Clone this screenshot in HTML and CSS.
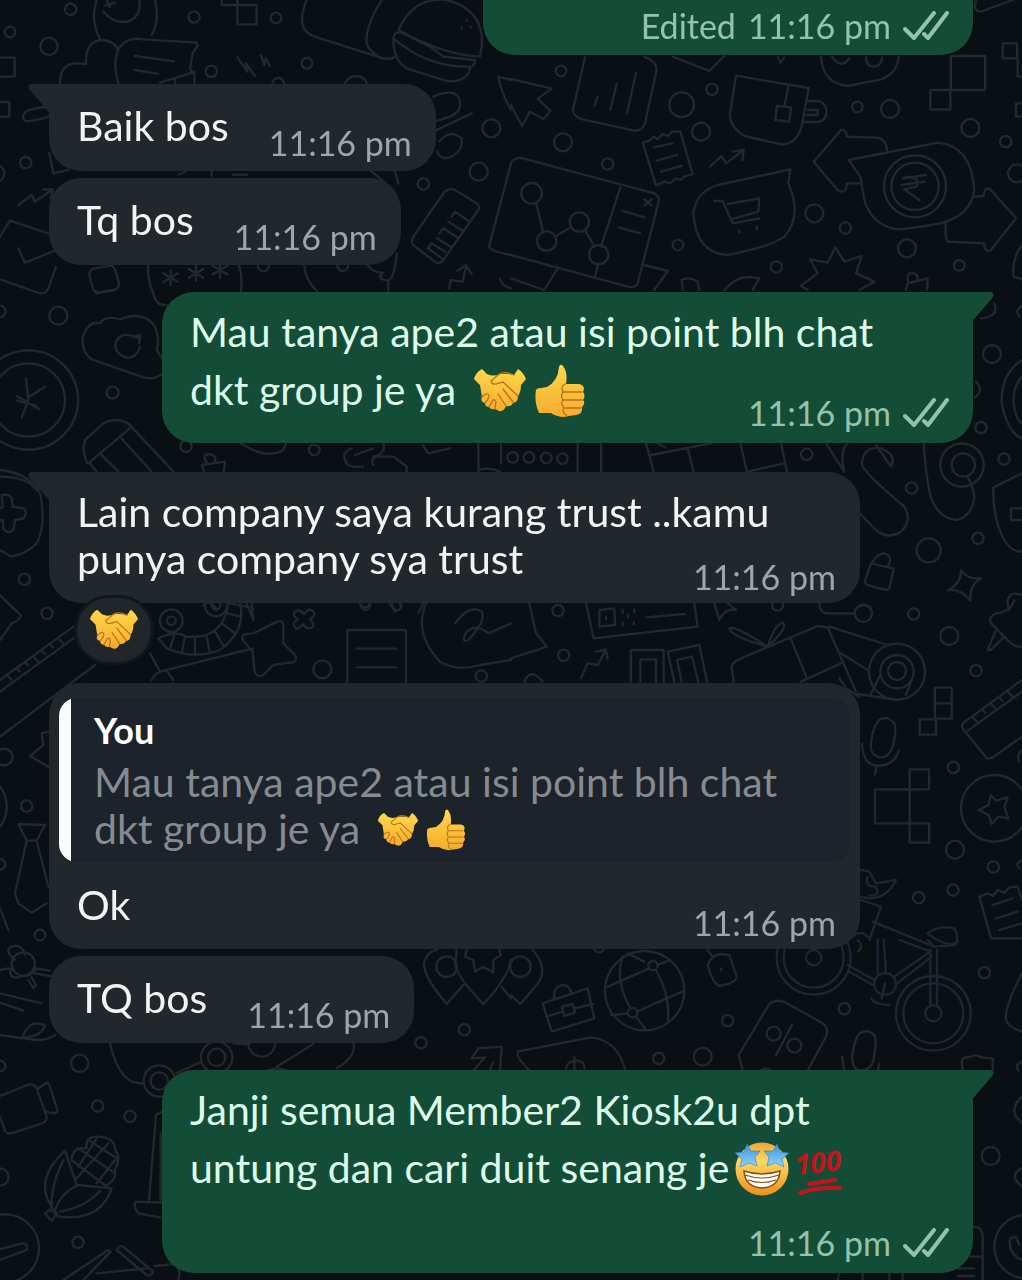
FILE: index.html
```html
<!DOCTYPE html>
<html lang="ms">
<head>
  <meta charset="UTF-8">
  <meta name="viewport" content="width=device-width, initial-scale=1.0">
  <title>Chat</title>
  <link rel="stylesheet" href="styles.css">
</head>
<body>

  <!-- Shared icons -->
  <svg class="sprite" aria-hidden="true">
    <defs>
      <linearGradient id="skin" x1="0" y1="0" x2="0" y2="1">
        <stop offset="0" stop-color="#ffd84a"/>
        <stop offset="1" stop-color="#f5ab2c"/>
      </linearGradient>
      <linearGradient id="face" x1="0" y1="0" x2="0" y2="1">
        <stop offset="0" stop-color="#f0a431"/>
        <stop offset=".35" stop-color="#fbd865"/>
        <stop offset=".7" stop-color="#f5b03a"/>
        <stop offset="1" stop-color="#ee8f1c"/>
      </linearGradient>
      <linearGradient id="star" x1="0" y1="0" x2="0" y2="1">
        <stop offset="0" stop-color="#3c94dc"/>
        <stop offset="1" stop-color="#8ed3fb"/>
      </linearGradient>
    </defs>
    <symbol id="handshake" viewBox="0 0 54 54">
      <path fill="url(#skin)" d="M9 5 L14 10 Q20 13 27 10 Q34 9 41 11 L45 5 Q50 8 53 15 L48 21 Q48 28 45 32 Q45 38 40 39 Q38 43 33 42 Q31 48 26 47 L22 45 Q18 46 16 43 Q12 43 12 39 Q7 38 9 33 L7 21 L1 15 Q3 8 9 5 Z"/>
      <path class="crease" d="M41 11 Q31 6 25 11 L18 17 Q19 22 26 19 L30 18 L45 32 M30 25 L40 38 M25 30 L33 42 M9 33 Q12 29 15 30 Q18 32 12 39 M16 43 L20 36 Q22 35 23 38 L22 45"/>
    </symbol>
    <symbol id="thumb" viewBox="0 0 54 54">
      <path fill="url(#skin)" d="M3 26 Q4 24 8 24 L14 23 Q25 17 26 3 Q27 -1 30 2 Q35 9 33 20 L46 20 Q51 21 51 25 L50 28 Q53 31 50 36 Q53 39 49 43 Q50 50 43 51 L30 53 Q22 52 18 49 L6 49 Q1 38 3 26 Z"/>
      <path class="crease" d="M32 20 Q27 23 30 28 Q27 32 30 36 Q27 40 31 44 Q28 48 34 52 M30 28 L49 28 M30 36 L49 36 M31 44 L48 44"/>
    </symbol>
    <symbol id="starstruck" viewBox="0 0 54 54">
      <circle cx="27" cy="27" r="26.5" fill="url(#face)"/>
      <path fill="#fff" stroke="#8d4a12" stroke-width="1.5" d="M9 29 Q27 35 45 29 Q44 45 27 46 Q10 45 9 29 Z"/>
      <path fill="none" stroke="#8d4a12" stroke-width="1.2" d="M10 33 Q27 39 44 33 M13 38 Q27 43 41 38"/>
      <path id="eye" fill="url(#star)" stroke="#2d7dbd" stroke-width=".6" d="M12 2 L16 9 L25 9 L20 15 L22 24 L14 21 L5 25 L7 17 L0 11 L9 10 Z"/>
      <use href="#eye" transform="matrix(-1 0 0 1 54 0)"/>
    </symbol>
    <symbol id="ticks" viewBox="0 0 46 30">
      <path fill="none" stroke="currentColor" stroke-width="4" stroke-linecap="round" stroke-linejoin="round" d="M2 18 L11 27 L31 2 M21 23 L25 27 L44 2"/>
    </symbol>
    <symbol id="tail" viewBox="0 0 22 30">
      <path fill="currentColor" d="M0 0 H19 Q23 1 21 5 L3 26 Q0 28 0 30 Z"/>
    </symbol>
  </svg>

  <!-- Wallpaper -->
  <svg class="wallpaper" viewBox="0 0 3066 3840" preserveAspectRatio="xMidYMin slice" aria-hidden="true">
    <g>
      <circle cx="212" cy="28" r="17"/><circle cx="30" cy="96" r="16"/><circle cx="147" cy="139" r="26"/>
      <circle cx="582" cy="51" r="17"/><circle cx="828" cy="54" r="16"/><circle cx="634" cy="214" r="17"/>
      <circle cx="921" cy="190" r="16"/><circle cx="77" cy="488" r="17"/><circle cx="1474" cy="385" r="27"/>
      <circle cx="1436" cy="515" r="27"/><circle cx="1270" cy="552" r="17"/><circle cx="790" cy="797" r="17"/>
      <circle cx="1028" cy="797" r="16"/><circle cx="-12" cy="520" r="25"/><circle cx="835" cy="252" r="18"/>
      <path d="M290 0 Q270 60 300 118 M465 0 Q480 60 455 105 M310 35 Q350 80 395 60 Q425 40 418 0 M320 0 l10 20 M345 8 l-28 8"/>
      <path d="M180 250 Q180 190 230 190 L258 192 Q255 120 310 120 Q345 125 355 150 M355 250 Q335 180 360 140 Q385 110 430 118 L590 128 L592 138 L578 160 L570 205 L578 218 L480 248 M405 168 L522 184 M402 210 L475 221 M525 235 v15 M583 215 v35"/>
      <path d="M665 0 V15 H712 V0 M712 15 H770 V73 H712 Z M0 173 H44 V230 H0 M0 306 H28 V350 H0"/>
      <path d="M712 172 L742 215 L738 190 L765 228 M782 165 L793 195 L797 175 L810 198"/>
      <path d="M920 0 Q895 60 915 90 Q925 105 960 115 L1150 175 Q1180 180 1190 165 M1145 0 Q1095 80 1100 130 Q1105 150 1130 165"/>
      <path d="M1195 90 Q1240 -10 1340 0 Q1455 30 1445 140 L1440 170 Q1330 165 1195 90 Z M1180 115 Q1185 90 1210 100 L1290 140 L1330 170 L1425 180 Q1425 205 1400 200 Q1280 200 1180 115 M1180 120 Q1180 180 1220 205 L1340 243 Q1400 250 1412 200 M1400 60 v3 M1385 83 v3 M1412 80 v3"/>
      <path d="M1035 250 Q1045 228 1070 228 Q1095 230 1100 250 M145 318 L85 330 Q62 345 72 360 Q80 370 145 350"/>
      <path d="M1300 290 Q1370 260 1380 305 Q1385 335 1350 350 L1305 365 M1310 390 L1415 340 M1318 425 Q1350 385 1385 415 Q1390 455 1350 472 Q1320 480 1312 455"/>
      <path d="M1495 230 L1533 240 M1495 230 Q1500 270 1533 330"/>
      <path d="M148 458 L160 520 L205 510 M55 615 L95 585 L105 605 L155 570 M130 568 L158 568 L152 595"/>
      <path d="M1110 510 L1180 570 M1185 515 L1195 550 M635 510 v18 M700 524 h40 M535 524 l20 -8"/>
      <path d="M0 710 L30 662 L160 705 M55 745 L75 788 L165 752 M0 838 L120 880 Q145 882 150 850 L168 800"/>
      <path d="M285 805 L335 797 Q345 800 357 850 Q357 865 345 868 L290 880 Q280 878 268 825 Q268 808 285 805 Z M445 790 Q440 840 465 895 M715 790 Q730 830 722 875 M912 790 Q915 840 950 872 M1100 790 Q1115 820 1150 818 Q1125 838 1165 842 V872 M1190 760 Q1185 830 1165 842"/>
      <path d="M512 810 v45 M490 820 l44 26 M534 820 l-44 26 M588 797 v45 M566 807 l44 26 M610 807 l-44 26 M660 790 v45 M638 797 l44 26 M682 797 l-44 26"/>
      <path d="M1330 580 Q1345 562 1365 570 L1430 610 Q1440 618 1435 630 L1330 780 Q1320 795 1305 785 L1245 740 Q1230 730 1240 710 Z M1283 745 L1295 730 L1335 755 M1310 715 L1355 742 M1318 700 L1330 685 L1370 712 M1345 665 L1385 690 M1355 650 L1365 635 L1405 662 M1285 745 L1325 775"/>
      <path d="M1348 865 L1352 840 L1388 845 L1398 800 M1372 812 L1398 796 L1415 822 M1500 835 Q1505 860 1533 865"/>
    </g>

    <g transform="translate(1533 0)">
      <circle cx="150" cy="213" r="16"/><circle cx="156" cy="427" r="27"/><circle cx="290" cy="492" r="17"/>
      <circle cx="512" cy="314" r="37"/><circle cx="603" cy="268" r="17"/><circle cx="570" cy="395" r="27"/>
      <circle cx="1039" cy="321" r="16"/><circle cx="1137" cy="327" r="27"/><circle cx="1378" cy="384" r="27"/>
      <circle cx="1484" cy="425" r="17"/><circle cx="910" cy="640" r="27"/><circle cx="1003" cy="684" r="17"/>
      <circle cx="1188" cy="745" r="27"/><circle cx="1345" cy="796" r="16"/><circle cx="501" cy="735" r="16"/>
      <circle cx="796" cy="801" r="17"/><circle cx="1518" cy="520" r="27"/>
      <path d="M0 237 L122 266 L80 296 L118 332 L98 358 L57 335 L33 378 L0 315"/>
      <path d="M222 172 L187 325 Q182 348 215 358 L370 392 Q395 393 402 370 L437 210 Q438 185 400 170 M260 290 L250 318 M317 252 L298 330 M375 218 L348 340 M485 170 L595 213 L640 168 M800 172 L808 188 L820 172"/>
      <path d="M930 170 Q935 250 1010 258 L1110 238 Q1160 220 1163 170 M963 170 Q990 210 1015 175 M1065 170 Q1065 200 1090 200 Q1115 195 1113 172"/>
      <path d="M1395 0 Q1385 35 1410 35 L1505 0 M1475 130 H1518 V175 H1475 Z M1320 168 H1422 V270 H1320 Z M1258 270 H1318 V328 H1258 Z M1533 310 H1515 V350 H1533 M1520 175 V230 H1533"/>
      <path d="M675 227 L893 264 L872 380 Q855 435 810 433 L700 408 Q655 380 657 340 Z M833 255 L820 318 M797 318 L840 322 L835 365 L793 360 Z M890 303 H925 Q945 310 947 335 Q945 365 920 366 H880 M890 330 H920 V345 H885"/>
      <path d="M395 428 L415 422 L430 410 L440 418 L455 402 L470 408 L485 394 L508 395 L545 522 L520 530 L510 540 L495 535 L475 550 L460 545 L435 556 Z M428 442 L485 430 M437 482 L500 464 M450 515 L512 498"/>
      <path d="M597 500 L632 468 L645 490 L698 450 M665 455 L698 450 L695 480"/>
      <path d="M0 490 Q10 470 35 475 L430 580 Q447 590 443 605 L380 850 Q372 865 350 860 L0 765 M-66 740 L0 490 M-66 740 Q-60 755 0 765 M328 563 L270 740 M262 790 L252 830 M335 633 L400 652 M325 683 L388 700 M400 598 l22 18 M422 598 l-22 18 M75 608 L97 697 M132 710 L182 680 M222 690 L250 740 M0 835 L100 870 L140 805 M400 795 L470 813 L430 870"/>
      <circle cx="62" cy="580" r="31"/><circle cx="107" cy="723" r="29"/><circle cx="205" cy="666" r="29"/><circle cx="263" cy="764" r="29"/>
      <path d="M838 508 L832 550 Q875 650 820 710 Q780 740 650 765 Q555 760 547 640 Q555 575 620 555 Z M610 603 H635 L665 670 L745 655 M650 612 L745 595 L742 635 L660 658 M685 690 v8 M737 680 v8"/>
      <path d="M1128 450 Q1125 415 1095 413 L1008 410 Q1005 388 990 390 L908 485 L980 570 Q1005 585 1008 550 L1045 550 M1013 480 L1280 428 Q1380 435 1390 570 Q1380 645 1290 670 Q1180 690 1150 687 Q1080 670 1060 600 L1048 530 Z M1390 590 L1418 588 Q1420 560 1437 567 L1515 655 L1440 750 Q1420 760 1420 730 L1310 725 Q1300 710 1305 668"/>
      <circle cx="1212" cy="559" r="93"/><circle cx="1212" cy="559" r="71"/>
      <path d="M1175 535 L1245 525 M1172 555 L1242 545 M1185 530 Q1235 535 1215 560 L1180 568 L1225 600"/>
      <path d="M870 857 L920 820 L897 778 L950 788 L973 742 L1000 785 L1052 768 L1035 820 L1090 845 L1045 870 M870 857 L890 870 M515 870 L512 840 Q535 828 560 845 L565 870 M640 870 Q680 820 745 835 L725 870 M1185 870 L1190 850 L1250 835 L1248 870 M1192 848 Q1185 815 1208 820 Q1225 825 1218 843 M1533 735 Q1500 780 1508 830 L1533 838"/>
    </g>

    <g transform="translate(0 870)">
      <circle cx="0" cy="64" r="17"/><circle cx="175" cy="77" r="27"/><circle cx="338" cy="308" r="18"/>
      <circle cx="558" cy="469" r="17"/><circle cx="943" cy="480" r="16"/><circle cx="73" cy="868" r="17"/>
      <circle cx="85" cy="330" r="149"/><circle cx="85" cy="330" r="110"/>
      <path d="M78 265 L85 330 L65 382 M85 322 L135 290 M50 318 L118 358 M50 332 L108 346"/>
      <path d="M300 100 Q315 75 360 88 Q430 60 465 110 Q480 150 470 180 L490 210 M488 250 Q465 270 430 262 L275 208 Q240 180 250 135 Q270 90 300 100 M420 170 Q410 205 380 203 Q340 190 348 155 Q365 120 415 145 M395 140 L420 135 L418 160 M458 0 Q465 50 500 45 M280 0 L295 8 L345 0"/>
      <path d="M262 520 Q240 470 260 445 L310 400 Q345 380 385 400 L520 545 M395 410 L360 440 L455 545 M265 520 L300 490 L360 440 M300 490 L355 545 M270 520 L290 545"/>
      <path d="M612 545 L605 525 L675 515 L672 545 M622 520 Q600 490 635 493 Q655 505 640 520 M722 460 Q800 510 850 480 L858 460 M1055 475 Q1025 485 1035 510 Q1040 535 1090 530 M1065 495 L1120 475 M1120 525 Q1110 505 1130 500 L1180 500 L1220 530 V545 M1150 460 Q1160 490 1120 500 M1268 465 L1285 490 L1350 475 M1435 460 V545 M1503 460 V520 M1435 540 Q1470 530 1500 545"/>
      <path d="M0 540 Q90 550 120 610 Q140 700 110 760 Q80 790 35 800 L0 780 M0 560 Q80 560 110 600 M5 615 Q30 610 35 625 L38 650 L70 655 Q85 665 70 685 L45 690 L40 720 Q20 735 10 715 L8 690 L0 690 M0 655 L8 650 L5 615 M0 915 L50 965"/>
      <path d="M610 945 Q630 925 650 960 M690 940 L760 955 M1080 945 Q1095 975 1112 945 M1170 940 L1185 965 M1270 940 L1255 970"/>
    </g>

    <g transform="translate(1533 870)">
      <circle cx="1443" cy="192" r="27"/><circle cx="1410" cy="413" r="17"/><circle cx="887" cy="493" r="17"/>
      <circle cx="1202" cy="594" r="17"/><circle cx="1479" cy="507" r="17"/><circle cx="1253" cy="781" r="36"/>
      <circle cx="1401" cy="745" r="17"/><circle cx="5" cy="502" r="16"/><circle cx="54" cy="502" r="16"/>
      <circle cx="106" cy="504" r="16"/><circle cx="154" cy="506" r="16"/>
      <path d="M1450 40 Q1465 80 1410 85 M1533 48 Q1510 60 1525 80 M1395 275 Q1420 300 1392 322 M1533 210 Q1470 250 1472 340 Q1490 430 1533 445 M1533 260 Q1505 290 1508 340 Q1515 390 1533 400"/>
      <path d="M200 460 V545 M270 460 V545 M405 460 L428 545 M420 495 L600 460 M530 475 L548 545 M688 460 L708 545 L820 520 M810 460 L828 545 M440 460 l22 12 M945 460 L1000 545 Q985 480 1010 460"/>
      <path d="M1145 520 Q1150 490 1110 475 Q1060 465 1052 520 Q1055 545 1180 650 Q1205 690 1170 725 Q1130 750 1095 720 L1048 672 M1095 465 L1140 530 L1145 505 M1238 460 Q1245 570 1262 630 Q1290 690 1340 690 Q1385 675 1390 620 Q1385 580 1368 560"/>
      <circle cx="1353" cy="525" r="65"/><circle cx="1357" cy="525" r="35"/>
      <path d="M1533 550 L1447 592 Q1445 690 1480 750 Q1500 785 1533 785 M1533 655 H1500 V690 H1533"/>
      <path d="M1080 820 L1145 835 Q1150 840 1145 850 L1135 895 Q1130 902 1118 898 L1070 885 Q1060 882 1063 870 Z M1085 815 Q1110 780 1130 795 Q1145 805 1130 830"/>
      <path d="M1350 842 Q1375 870 1410 865 Q1375 885 1378 932 Q1350 895 1312 900 Q1350 880 1350 842 Z M1035 955 Q1060 935 1080 955 M1495 960 Q1480 920 1510 910 L1533 915"/>
    </g>

    <g transform="translate(0 1800)">
      <circle cx="141" cy="40" r="17"/><circle cx="13" cy="471" r="25"/><circle cx="80" cy="618" r="17"/>
      <circle cx="0" cy="793" r="16"/><circle cx="120" cy="1005" r="16"/><circle cx="967" cy="208" r="27"/>
      <circle cx="1444" cy="228" r="17"/><circle cx="514" cy="62" r="34"/><circle cx="514" cy="62" r="13"/>
      <circle cx="648" cy="15" r="34"/><circle cx="648" cy="15" r="13"/><circle cx="-80" cy="620" r="100"/>
      <path d="M25 10 L62 45 Q62 60 35 70 L0 120 M0 240 L220 80 M0 275 L220 115 M20 225 l14 14 M50 205 l9 9 M75 187 l9 9 M100 170 l14 14 M125 152 l9 9 M150 133 l9 9 M175 115 l14 14 M0 410 L285 195"/>
      <path d="M475 115 Q530 90 560 110 Q670 120 685 10 M475 115 L500 145 Q580 180 660 150 Q740 90 720 10 M510 145 L525 98 M545 160 L555 110 M585 165 L585 117 M630 160 L620 110 M672 140 L645 95 M705 100 L665 70 M722 50 L682 40"/>
      <path d="M760 100 L825 68 Q850 55 850 80 L850 130 L885 165 Q895 190 865 188 L820 195 L790 225 Q765 235 763 205 L758 155 L728 120 Q720 100 760 100 Z M450 160 L480 215 L760 145 M455 240 Q470 210 500 212 L520 240 M740 10 L760 60 L755 10"/>
      <path d="M885 35 Q900 25 912 42 Q930 20 940 35 Q950 45 930 58 Q950 80 930 85 Q915 85 910 72 Q890 95 885 80 Q875 70 893 58 Q875 45 885 35 Z M1042 245 V90 H1218 V245 M1070 146 H1188 M1070 202 H1188 M1278 10 Q1240 100 1320 185 Q1370 215 1440 195 L1533 180 M1365 70 Q1410 10 1445 35 Q1460 60 1405 120 Q1380 130 1400 95 Q1430 70 1465 100 L1533 70 M1080 10 Q1095 35 1110 10 M1175 10 Q1180 35 1195 30 Q1210 20 1200 10"/>
      <path d="M145 395 L125 400 L130 435 L90 468 L145 500 M55 672 L135 675 L110 722 H80 Z M80 722 L45 880 L55 910 L95 938 L140 910 M110 722 L145 860 M0 925 L25 990"/>
    </g>

    <g transform="translate(1533 1800)">
      <circle cx="141" cy="32" r="17"/><circle cx="158" cy="166" r="17"/><circle cx="1208" cy="42" r="17"/>
      <circle cx="1315" cy="108" r="27"/><circle cx="1395" cy="212" r="17"/><circle cx="1057" cy="40" r="26"/>
      <circle cx="1327" cy="502" r="17"/><circle cx="1332" cy="749" r="27"/><circle cx="1447" cy="801" r="17"/>
      <circle cx="1326" cy="870" r="17"/><circle cx="1223" cy="893" r="17"/><circle cx="800" cy="15" r="17"/>
      <circle cx="1450" cy="625" r="100"/><circle cx="1158" cy="215" r="84"/><circle cx="1158" cy="215" r="50"/><circle cx="1158" cy="213" r="27"/>
      <path d="M55 10 L75 100 L108 140 L0 175 M225 10 L248 115 L560 80 L550 10 M265 30 L310 25 L312 75 L265 80 Z M285 50 v8 M335 30 v8 M350 45 v8 M370 28 v8 M335 68 v8 M368 65 v8 M405 52 L520 42 M210 235 L230 190 L260 195 L285 148 M255 155 L285 148 L290 178 M40 245 Q60 200 95 245"/>
      <path d="M360 245 V150 H458 V245 M388 245 V178 H435 V245 M490 245 L470 155 L565 135 L588 245 M512 245 L498 180 L543 170 L562 245"/>
      <path d="M610 10 L625 60 Q640 25 675 30 L650 10 M770 140 Q660 110 655 85 Q670 75 770 140 Q790 75 815 68 Q835 80 770 140 M668 245 L662 200 Q665 185 690 175 L920 78 L950 82 L1035 275 M840 118 L888 235 M870 245 L990 190 M955 80 L1130 135 M990 160 L1070 210 M1080 282 L1105 230 M1185 285 L1200 245 M1040 282 L1160 300 M985 235 L1005 265 L1045 290 M925 10 Q925 40 950 40 H1030"/>
      <path d="M1105 360 Q1130 345 1150 370 Q1158 390 1145 440 Q1130 480 1100 470 Q1075 460 1080 430 Q1085 380 1105 360 Z M1053 432 Q1055 495 1100 497 Q1150 498 1163 452 M1097 497 L1092 523"/>
      <path d="M1272 263 H1322 V356 H1272 Z M1272 310 H1322 M1226 358 H1275 V404 H1226 Z M1196 508 H1254 V568 H1196 Z M1092 568 H1196 V670 H1092 Z M1196 670 H1254 V728 H1196 Z M1196 568 V670"/>
      <path d="M1533 240 L1355 370 Q1350 380 1358 390 L1425 472 Q1432 478 1445 472 L1533 410 M1370 392 L1533 275 M1385 352 l14 14 M1415 330 l9 9 M1440 312 l14 14 M1465 293 l9 9 M1490 275 l14 14 M1533 450 Q1515 465 1525 485 M1533 780 Q1510 790 1525 805"/>
      <path d="M1440 585 L1455 602 L1490 592 L1480 622 L1492 655 L1462 650 L1442 672 L1433 645 L1403 630 L1432 615 Z M1510 0 Q1500 35 1455 40 Q1425 55 1445 75 L1480 110 Q1510 145 1533 140 M1455 90 L1430 150 L1440 150 L1480 110"/>
      <path d="M1405 890 L1430 880 L1445 888 L1460 870 L1480 878 L1495 862 L1520 860 L1533 900 M1405 890 L1440 1015 L1533 1015 M1445 915 L1505 895 M1455 955 L1520 935 M1465 990 L1533 970"/>
      <path class="cool" d="M1050 810 L1075 815 L1095 850 L1155 840 Q1120 910 1045 890 M1070 830 Q1060 860 1095 860 Q1110 890 1075 885 M1050 900 L1110 920 L1075 1020 M1085 965 L1270 1040 M1020 1015 Q1045 985 1070 1010 M1250 1000 Q1280 975 1330 985 Q1345 1010 1335 1030 Q1300 1040 1250 1000"/>
    </g>

    <g transform="translate(0 2820)">
      <circle cx="239" cy="370" r="26"/><circle cx="293" cy="498" r="17"/><circle cx="390" cy="529" r="17"/>
      <circle cx="234" cy="907" r="17"/><circle cx="0" cy="378" r="16"/><circle cx="0" cy="711" r="26"/>
      <circle cx="1263" cy="308" r="17"/><circle cx="1393" cy="269" r="17"/><circle cx="650" cy="352" r="47"/>
      <circle cx="650" cy="352" r="26"/><circle cx="478" cy="423" r="47"/><circle cx="478" cy="423" r="26"/>
      <circle cx="785" cy="310" r="40"/><circle cx="1340" cy="80" r="31"/><circle cx="70" cy="72" r="35"/><circle cx="15" cy="925" r="102"/>
      <path d="M45 60 Q10 30 35 20 Q65 10 75 45 M30 90 Q30 120 60 110 Q95 110 110 85 M100 85 L150 92 M105 100 L160 110 M85 120 L100 145 L108 135 L95 112 M0 90 Q30 82 40 90 M0 160 L125 190 M0 188 L70 212 M0 285 L110 300 Q150 300 165 285 M70 285 Q85 250 110 250 L135 255 Q125 290 70 292"/>
      <path d="M330 310 Q350 400 395 425 L432 432 M528 400 L605 365 M830 380 L940 312 M700 310 Q740 315 750 310 M1060 310 Q1070 350 1010 385 M800 392 Q830 380 860 392"/>
      <path d="M1340 192 Q1270 110 1272 70 Q1280 35 1310 30 M1340 192 L1390 135 M1450 192 Q1370 110 1365 70 L1370 30 M1450 192 Q1520 120 1533 60 M1400 30 L1395 50 L1420 60 L1425 95 L1450 80 L1480 98 L1480 60 L1503 45 L1498 30 M1505 140 L1533 175"/>
      <path d="M1415 355 L1435 325 L1505 320 L1500 392 M1418 355 L1455 352 L1420 392 M1470 390 L1480 365"/>
      <path d="M0 468 L90 432 Q105 435 110 445 L140 530 Q140 545 125 550 L35 580 Q20 582 15 572 L0 530 M115 445 L140 428 Q145 430 150 440 L172 510 Q172 520 160 520 L138 515"/>
      <path d="M155 800 Q100 720 195 632 L230 735 M155 815 Q150 740 190 660 M165 812 Q180 760 235 735 L335 745 Q300 850 165 828 Z M180 815 Q260 800 300 752 M135 820 L155 805 L172 820 L155 842 Z M215 655 Q220 620 260 625 Q255 590 290 590 Q345 590 345 630 Q365 650 345 690 Q350 720 320 735 M215 660 L320 740 M235 625 L345 700 M265 600 L350 655 M225 720 L325 610 M290 730 L345 660 M235 680 L290 595"/>
      <path d="M488 515 L468 525 L447 780 M482 580 V785 M485 788 L405 785 Q400 800 415 820 L480 832 M0 928 L65 910 Q85 910 80 930 L0 960 M190 1020 L310 940 Q325 925 332 935 L250 1020 M290 1000 L440 985 M350 930 Q360 910 375 925 L460 995 Q455 1010 440 1005 Z M465 978 L525 972 Q545 990 535 1020"/>
    </g>

    <g transform="translate(1533 2820)">
      <circle cx="28" cy="80" r="31"/><circle cx="650" cy="242" r="17"/><circle cx="443" cy="355" r="17"/>
      <circle cx="575" cy="350" r="27"/><circle cx="1000" cy="206" r="17"/><circle cx="1420" cy="98" r="17"/>
      <circle cx="1439" cy="648" r="27"/><circle cx="788" cy="281" r="21"/><circle cx="850" cy="317" r="21"/>
      <circle cx="401" cy="152" r="119"/><circle cx="426" cy="77" r="14"/><circle cx="365" cy="218" r="14"/><circle cx="1545" cy="920" r="95"/>
      <path d="M65 30 Q110 80 85 125 L28 192 L0 165 M95 190 L230 145 L250 235 L122 275 Z M105 230 L155 215 M190 205 L245 192 M152 200 L185 192 L192 218 L160 228 Z M130 175 Q125 140 155 135 Q175 135 182 160"/>
      <path d="M290 140 L415 85 M440 75 L475 60 M335 50 Q310 120 358 205 M375 230 Q390 250 405 270 M435 90 Q480 170 470 250 M380 215 Q430 190 515 155 M300 225 L350 220 M400 65 L350 40"/>
      <path d="M590 75 Q600 45 630 42 L655 45 L677 110 Q675 130 625 138 Q605 130 590 75 Z M630 85 v6 M590 30 L605 50 M250 30 Q265 45 278 30 M20 340 Q15 350 55 392 M20 335 L240 292 Q320 300 343 392 M165 385 Q170 360 200 362 Q220 365 220 385 M190 350 V392"/>
      <path d="M775 192 Q795 175 825 188 L935 250 Q955 265 945 290 L890 392 M775 192 L683 345 L695 392 M843 255 L795 345 M750 392 Q765 380 780 392"/>
      <path d="M1045 280 Q1070 265 1090 285 Q1100 300 1085 370 Q1070 395 1040 390 Q1018 375 1025 340 Q1030 300 1045 280 Z M993 350 L1000 392 M1105 372 L1100 392 M1355 392 L1352 365 Q1355 350 1370 352 L1395 345 Q1410 355 1445 355 V392 M1533 100 Q1480 200 1485 240 Q1490 260 1533 275 M1533 365 Q1510 375 1522 392"/>
      <path d="M1533 470 Q1500 500 1515 530 L1533 550 M1533 685 Q1490 705 1533 740 M1385 860 Q1415 860 1415 890 V1020 M1370 950 H1415 M1340 985 H1390 M1340 1008 H1390 M1497 895 Q1490 940 1533 960 M1497 895 L1515 890 L1525 915 M985 1000 L980 1020 M1055 1000 V1020 M1135 1000 V1020 M1175 1000 V1020"/>
      <g class="cool">
        <circle cx="908" cy="53" r="111"/><circle cx="908" cy="53" r="90"/><circle cx="908" cy="53" r="23"/>
        <circle cx="1267" cy="220" r="112"/><circle cx="1267" cy="220" r="90"/><circle cx="1267" cy="220" r="24"/><circle cx="1122" cy="132" r="33"/>
        <path d="M1010 75 L1090 120 M1015 95 L1085 135 M1100 0 V100 M1118 0 L1125 100 M1165 0 L1260 35 M1150 110 L1258 35 M1158 130 L1262 50 M1258 30 V198 M1278 30 V198 M1250 0 L1270 20 L1330 15 L1340 0 M1040 0 Q1060 20 1040 35 M1122 130 L1112 175 M1080 175 Q1090 195 1135 195"/>
      </g>
    </g>
  </svg>

  <main class="chat">
    <article class="bubble out cut">
      <div class="meta"><span>Edited</span> <time>11:16 pm</time> <svg class="ticks" role="img" aria-label="Delivered"><use href="#ticks"/></svg></div>
    </article>

    <article class="bubble in short first">
      <svg class="tail" aria-hidden="true"><use href="#tail"/></svg>
      <p class="text">Baik bos</p>
      <div class="meta"><time>11:16 pm</time></div>
    </article>

    <article class="bubble in short">
      <p class="text">Tq bos</p>
      <div class="meta"><time>11:16 pm</time></div>
    </article>

    <article class="bubble out wide first">
      <svg class="tail" aria-hidden="true"><use href="#tail"/></svg>
      <p class="text">Mau tanya ape2 atau isi point blh chat<br>dkt group je ya <svg class="emoji" role="img" aria-label="handshake"><use href="#handshake"/></svg><svg class="emoji" role="img" aria-label="thumbs up"><use href="#thumb"/></svg></p>
      <div class="meta"><time>11:16 pm</time> <svg class="ticks" role="img" aria-label="Delivered"><use href="#ticks"/></svg></div>
    </article>

    <article class="bubble in wide first reacted">
      <svg class="tail" aria-hidden="true"><use href="#tail"/></svg>
      <p class="text">Lain company saya kurang trust ..kamu<br>punya company sya trust</p>
      <div class="meta"><time>11:16 pm</time></div>
      <button class="reaction" type="button" aria-label="Reaction: handshake"><svg><use href="#handshake"/></svg></button>
    </article>

    <article class="bubble in wide reply">
      <blockquote class="quote">
        <strong>You</strong>
        <p>Mau tanya ape2 atau isi point blh chat<br>dkt group je ya <svg class="emoji" role="img" aria-label="handshake"><use href="#handshake"/></svg><svg class="emoji" role="img" aria-label="thumbs up"><use href="#thumb"/></svg></p>
      </blockquote>
      <p class="text">Ok</p>
      <div class="meta"><time>11:16 pm</time></div>
    </article>

    <article class="bubble in short">
      <p class="text">TQ bos</p>
      <div class="meta"><time>11:16 pm</time></div>
    </article>

    <article class="bubble out wide first">
      <svg class="tail" aria-hidden="true"><use href="#tail"/></svg>
      <p class="text">Janji semua Member2 Kiosk2u dpt<br>untung dan cari duit senang je<svg class="emoji" role="img" aria-label="star-struck"><use href="#starstruck"/></svg><svg class="emoji hundred" viewBox="0 0 54 54">
        <text x="1" y="33" transform="rotate(-6 1 33)">100</text>
        <path d="M14 42 L40 38 M5 51 Q24 45 45 46"/>
      </svg></p>
      <div class="meta below"><time>11:16 pm</time> <svg class="ticks" role="img" aria-label="Delivered"><use href="#ticks"/></svg></div>
    </article>
  </main>

</body>
</html>
```
FILE: styles.css
```css
* {
  box-sizing: border-box;
}
body {
  margin: 0;
  background-color: #0a0f13;
  font-family: Lato, "Open Sans", sans-serif;
  font-size: 41px;
  line-height: 47px;
  color: #f1f4f6;
}
p {
  margin: 0;
}
.sprite {
  position: absolute;
  width: 0;
  height: 0;
}
.crease {
  fill: none;
  stroke: #b9701c;
  stroke-width: 1.3;
  stroke-linecap: round;
}

/* wallpaper */
.wallpaper {
  position: fixed;
  inset: 0;
  width: 100%;
  height: 100%;
  z-index: -1;
  fill: none;
  stroke: #23282c;
  stroke-width: 7;
  stroke-linecap: round;
  stroke-linejoin: round;
}
.wallpaper .cool {
  stroke: #212532;
}

/* messages */
.chat {
  display: flex;
  flex-direction: column;
  align-items: flex-start;
  gap: 7px;
  min-height: 100vh;
  padding: 0 49px 8px;
}
.bubble {
  position: relative;
  display: flex;
  flex-direction: column;
  padding: 16px 24px 6px 28px;
  border-radius: 32px;
}
.in {
  background-color: #21272b;
}
.out {
  align-self: flex-end;
  padding-bottom: 10px;
  color: #dcfce9;
  background-color: #144d37;
}
.wide {
  width: 100%;
  max-width: 811px;
}
.short {
  flex-direction: row;
  gap: 40px;
  padding-top: 18px;
  padding-bottom: 8px;
}
.cut {
  width: 490px;
  max-width: 100%;
  padding-top: 6px;
  padding-bottom: 9px;
  border-radius: 0 0 32px 32px;
}
.in.first {
  margin-top: 22px;
  border-top-left-radius: 0;
}
.out.first {
  margin-top: 20px;
  border-top-right-radius: 0;
}
.reacted {
  margin-bottom: 73px;
}
.tail {
  position: absolute;
  top: 0;
  width: 22px;
  height: 30px;
}
.out .tail {
  right: -21px;
  color: #144d37;
}
.in .tail {
  left: -21px;
  color: #21272b;
  transform: scaleX(-1);
}

/* time and ticks */
.meta {
  display: flex;
  align-items: center;
  align-self: flex-end;
  gap: 12px;
  font-size: 34px;
  line-height: 40px;
  color: #a0a5a9;
}
.out .meta {
  color: #93c3ab;
}
.wide .meta {
  margin-top: -25px;
}
.wide .meta.below {
  margin-top: 27px;
}
.short .meta {
  margin-top: 21px;
}
.ticks {
  width: 46px;
  height: 30px;
}

/* emoji */
.emoji {
  width: 54px;
  height: 54px;
  margin: 9px 0 0 6px;
  vertical-align: -13px;
}
.hundred {
  overflow: visible;
  fill: none;
  stroke: #c3161c;
  stroke-width: 4;
  stroke-linecap: round;
}
.hundred text {
  font: italic bold 28px "Open Sans", sans-serif;
  fill: #c3161c;
  stroke: none;
}
.reaction {
  position: absolute;
  left: 25px;
  bottom: -62px;
  display: flex;
  align-items: center;
  justify-content: center;
  width: 80px;
  height: 70px;
  padding: 0;
  border: 3px solid #10161a;
  border-radius: 35px;
  background-color: #20262a;
}
.reaction svg {
  width: 50px;
  height: 50px;
}

/* quoted reply */
.reply {
  padding-top: 15px;
}
.quote {
  margin: 0 -14px 19px -18px;
  padding: 10px 12px 10px 35px;
  border-radius: 18px;
  background: linear-gradient(to right, #fafdfd 12px, #1d232a 12px);
  color: #858b91;
}
.quote strong {
  display: block;
  margin-bottom: 6px;
  font-size: 36px;
  line-height: 44px;
  color: #fff;
}
.quote .emoji {
  width: 42px;
  height: 42px;
  margin-top: 0;
  vertical-align: -7px;
}
```
